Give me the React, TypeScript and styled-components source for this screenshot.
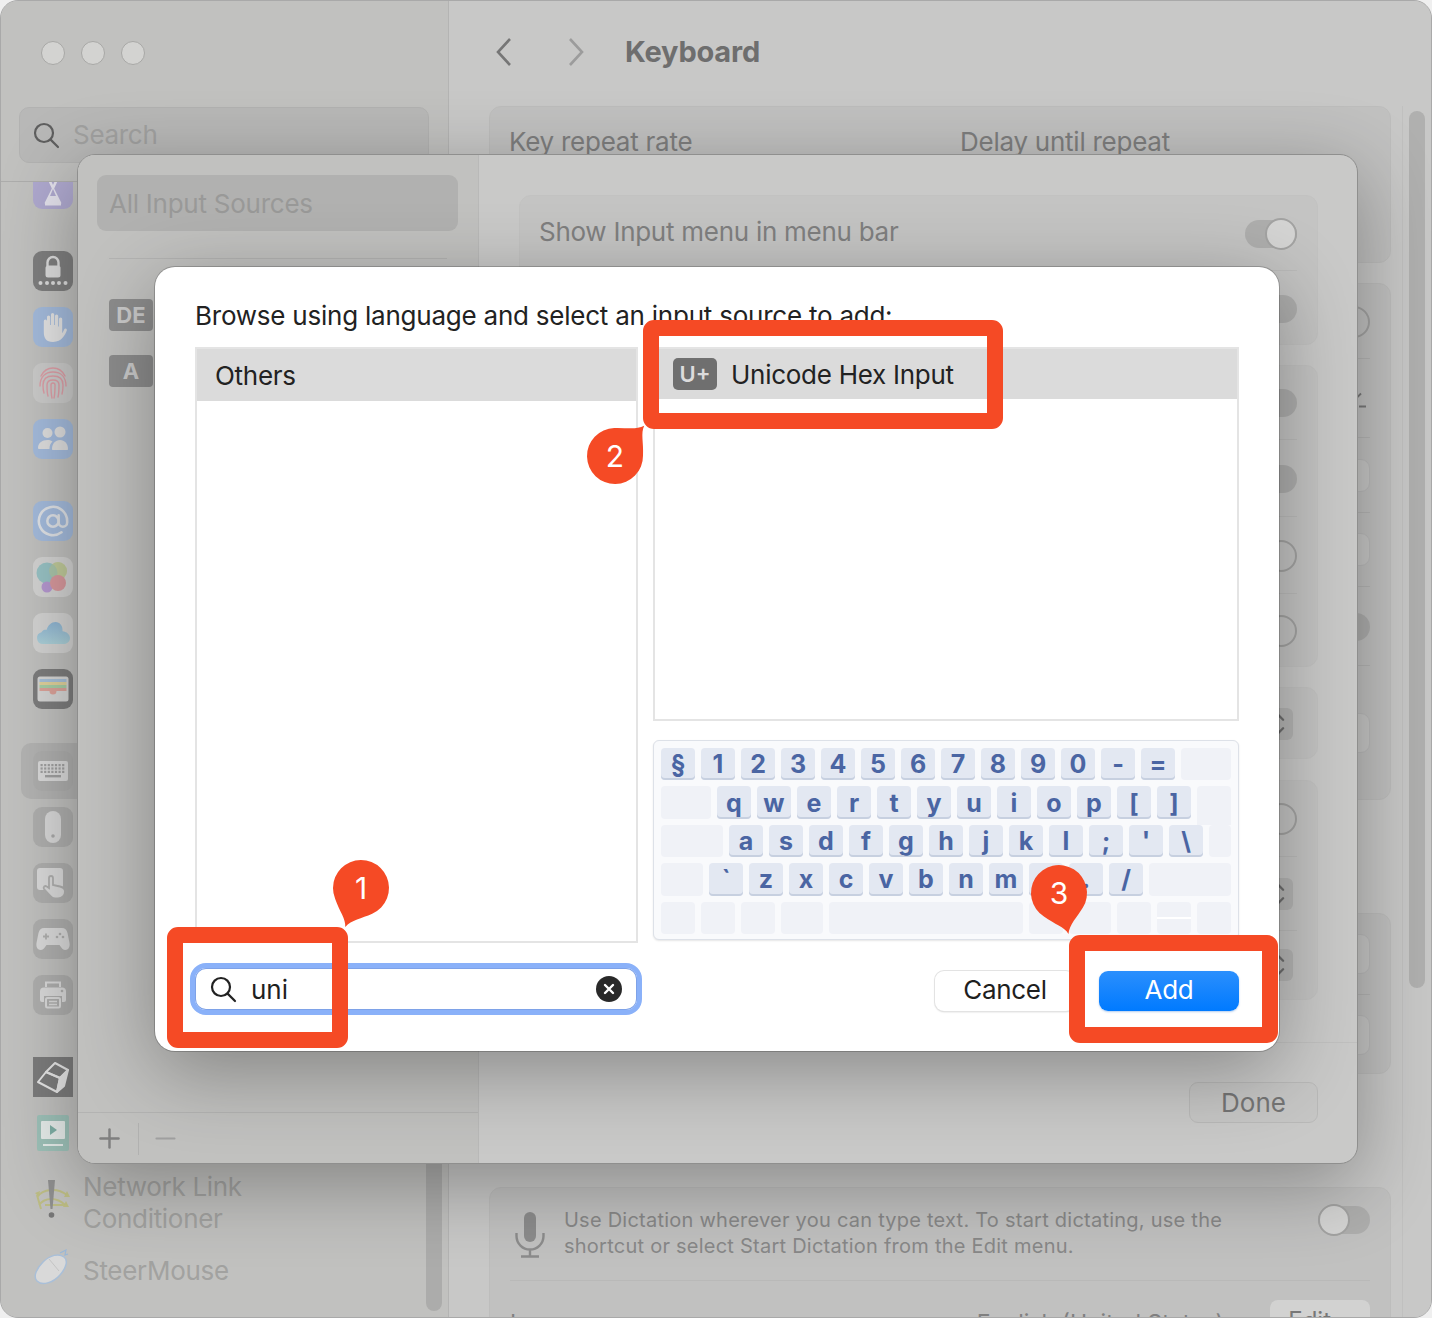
import React from "react";
import styled, { createGlobalStyle } from "styled-components";
import { Plus, Minus, ChevronsUpDown, AtSign } from "lucide-react";

const Global = createGlobalStyle`
  html, body { margin: 0; padding: 0; background: #efefef; }
  body { width: 1432px; height: 1318px; overflow: hidden; font-family: Inter, "Noto Sans", sans-serif; -webkit-font-smoothing: antialiased; }
  * { box-sizing: border-box; }
`;

const Page = styled.div`
  position: relative;
  width: 1432px;
  height: 1318px;
  overflow: hidden;
`;

const Window = styled.div`
  display: flex;
  isolation: isolate;
  width: 1432px;
  height: 1318px;
  border: 1px solid #a9a9a9;
  border-radius: 18px;
  overflow: hidden;
  background: #c6c6c5;
`;

/* ---------- back window: sidebar ---------- */
const Sidebar = styled.aside`
  position: relative;
  width: 448px;
  flex: none;
  height: 100%;
  background: #c1c1bf;
  border-right: 1px solid #b4b4b3;
  overflow: hidden;
`;
const SideHead = styled.div`
  height: 181px;
  border-bottom: 1px solid #adadac;
  padding: 106px 18px 0;
  position: relative;
  z-index: 1;
  background: #c1c1bf;
`;
const Traffic = styled.div`
  position: absolute;
  left: 40px;
  top: 40px;
  display: flex;
  gap: 16px;
`;
const Light = styled.span`
  width: 24px;
  height: 24px;
  border-radius: 50%;
  background: #d3d3d1;
  border: 1px solid #a8a8a6;
`;
const SideSearch = styled.div`
  display: flex;
  align-items: center;
  gap: 13px;
  height: 56px;
  width: 410px;
  padding: 0 0 0 13px;
  border-radius: 10px;
  background: #b8b8b7;
  border: 1px solid #b2b2b1;
  color: #a1a1a0;
  font-size: 26px;
  letter-spacing: -0.3px;
  line-height: 60px;
  svg { flex: none; }
`;
const SideList = styled.div`
  display: flex;
  flex-direction: column;
  margin-top: -21px;
`;
const Group = styled.div`
  display: flex;
  flex-direction: column;
  margin-bottom: 26px;
`;
const Row = styled.div<{ $selected?: boolean; $h?: number }>`
  display: flex;
  align-items: center;
  gap: 10px;
  height: ${(p) => p.$h ?? 56}px;
  margin: 0 12px 0 20px;
  padding-left: 12px;
  border-radius: 10px;
  background: ${(p) => (p.$selected ? "#b3b3b2" : "transparent")};
`;
const Tile = styled.div<{ $bg: string; $fg?: string; $radius?: number; $w?: number; $h?: number }>`
  width: ${(p) => p.$w ?? 40}px;
  height: ${(p) => p.$h ?? 40}px;
  margin-left: ${(p) => (40 - (p.$w ?? 40)) / 2}px;
  flex: none;
  border-radius: ${(p) => p.$radius ?? 9}px;
  background: ${(p) => p.$bg};
  color: ${(p) => p.$fg ?? "#dcdcdc"};
  display: flex;
  align-items: center;
  justify-content: center;
`;
const SideLabel = styled.div`
  margin-top: 4px;
  font-size: 26px;
  letter-spacing: -0.3px;
  line-height: 32px;
  color: #a2a2a0;
`;
const SideThumb = styled.div`
  position: absolute;
  left: 425px;
  top: 1130px;
  width: 16px;
  height: 180px;
  border-radius: 8px;
  background: #acacab;
`;

/* ---------- back window: main ---------- */
const Main = styled.main`
  position: relative;
  flex: 1;
  min-width: 0;
  height: 100%;
  padding: 0 40px;
  overflow: hidden;
  background: #c8c8c7;
`;
const TitleBar = styled.header`
  display: flex;
  align-items: center;
  height: 105px;
  padding: 0 0 4px 6px;
  gap: 54px;
  svg { flex: none; }
`;
const Title = styled.h1`
  margin: 0 0 0 -14px;
  font-size: 29px;
  font-weight: 700;
  color: #6e6e6e;
  letter-spacing: -0.2px;
`;
const Card = styled.section<{ $h: number; $mt?: number }>`
  width: 902px;
  height: ${(p) => p.$h}px;
  margin-top: ${(p) => p.$mt ?? 0}px;
  border: 1px solid #bdbdbc;
  border-radius: 12px;
  background: #c1c1c0;
`;
const CardTop = styled.div`
  display: flex;
  padding: 19px 19px 0;
  font-size: 26px;
  letter-spacing: -0.25px;
  line-height: 32px;
  color: #7e7e7e;
  span { width: 451px; flex: none; }
`;
const CardRow = styled.div<{ $h: number; $line?: boolean }>`
  display: flex;
  align-items: center;
  justify-content: flex-end;
  height: ${(p) => p.$h}px;
  margin: 0 20px;
  border-bottom: ${(p) => (p.$line ? "1px solid #b5b5b4" : "0")};
`;
const Toggle = styled.span<{ $mode: "on" | "off" | "ring"; $knob?: "l" | "r" }>`
  display: flex;
  justify-content: ${(p) => (p.$knob === "l" ? "flex-start" : "flex-end")};
  align-items: center;
  flex: none;
  width: 52px;
  height: 28px;
  margin-top: 1px;
  padding: 0;
  border-radius: 15px;
  background: ${(p) => (p.$mode === "ring" ? "transparent" : "#aeaead")};
  &::after {
    content: "";
    display: ${(p) => (p.$mode === "off" ? "none" : "block")};
    width: 28px;
    height: 28px;
    border-radius: 50%;
    background: ${(p) => (p.$mode === "ring" ? "transparent" : "#d4d4d3")};
    border: 2px solid #a3a3a2;
  }
`;
const DictToggle = styled(Toggle)`
  margin-top: -1px;
`;
const SmallButton = styled.span<{ $w?: number; $h?: number }>`
  display: flex;
  align-items: center;
  justify-content: center;
  width: ${(p) => p.$w ?? 110}px;
  height: ${(p) => p.$h ?? 40}px;
  border-radius: 9px;
  background: #c8c8c7;
  border: 1px solid #bbb;
`;
const DictText = styled.p`
  margin: 0;
  flex: 1;
  font-size: 20px;
  letter-spacing: 0.24px;
  line-height: 26px;
  color: #888;
`;
const DictRow = styled.div`
  display: flex;
  align-items: flex-start;
  gap: 19px;
  height: 93px;
  margin: 0 20px;
  border-bottom: 1px solid #b9b9b8;
  padding: 19px 0 0 5px;
  svg { flex: none; margin-top: 5px; }
`;
const LangRow = styled.div`
  display: flex;
  align-items: flex-start;
  justify-content: space-between;
  margin: 19px 20px 0;
  font-size: 23px;
  line-height: 26px;
  color: #808080;
`;
const LangName = styled.span`
  margin-top: 10px;
`;
const LangValue = styled.div`
  display: flex;
  align-items: flex-start;
  gap: 46px;
  margin-left: auto;
`;
const EditButton = styled.span`
  width: 100px;
  height: 40px;
  border-radius: 8px;
  background: #d2d2d1;
  text-align: center;
  font-size: 24px;
  line-height: 42px;
  color: #777;
`;
const Track = styled.div`
  position: absolute;
  right: 0;
  top: 105px;
  bottom: 0;
  width: 29px;
  background: #c8c8c7;
  border-left: 1px solid #c0c0bf;
`;
const Thumb = styled.div`
  position: absolute;
  left: 6px;
  top: 5px;
  width: 16px;
  height: 877px;
  border-radius: 8px;
  background: #b0b0af;
`;

/* ---------- sheet ---------- */
const Sheet = styled.div`
  position: absolute;
  left: 77px;
  top: 154px;
  width: 1281px;
  height: 1010px;
  display: flex;
  border: 1px solid #8f8f8e;
  border-radius: 18px;
  overflow: hidden;
  background: #c9c9c8;
  box-shadow: 0 20px 80px rgba(0, 0, 0, 0.32);
`;
const SheetLeft = styled.div`
  display: flex;
  flex-direction: column;
  width: 401px;
  flex: none;
  background: #c1c1bf;
  border-right: 1px solid #b9b9b8;
`;
const LeftBody = styled.div`
  flex: 1;
  padding: 20px 20px 0 19px;
`;
const AllSources = styled.div`
  height: 56px;
  padding: 0 12px;
  border-radius: 9px;
  background: #b1b1b0;
  font-size: 26px;
  letter-spacing: -0.25px;
  line-height: 58px;
  color: #999998;
`;
const LeftLine = styled.div`
  height: 1px;
  margin: 27px 11px 40px 12px;
  background: #b3b3b2;
`;
const SourceRow = styled.div`
  height: 56px;
  padding-left: 12px;
`;
const SourceBadge = styled.span`
  display: block;
  width: 44px;
  height: 32px;
  border-radius: 4px;
  background: #8c8c8c;
  color: #c9c9c9;
  font-size: 22px;
  font-weight: 700;
  line-height: 32px;
  text-align: center;
`;
const LeftFoot = styled.div`
  display: flex;
  align-items: center;
  height: 51px;
  border-top: 1px solid #b3b3b2;
  color: #7f7f7f;
  padding: 1px 0 0 16px;
  svg { flex: none; }
`;
const FootSep = styled.span`
  width: 1px;
  height: 32px;
  margin: 0 11px 0 13px;
  background: #b1b1b0;
`;
const SheetRight = styled.div`
  display: flex;
  flex-direction: column;
  flex: 1;
  min-width: 0;
  padding: 40px 39px 0 40px;
`;
const SheetCard = styled.section<{ $h: number; $mt?: number }>`
  height: ${(p) => p.$h}px;
  margin-top: ${(p) => p.$mt ?? 0}px;
  flex: none;
  border: 1px solid #c2c2c1;
  border-radius: 12px;
  background: #c4c4c3;
`;
const SheetRow = styled.div<{ $h: number; $line?: boolean }>`
  display: flex;
  align-items: center;
  justify-content: flex-end;
  height: ${(p) => p.$h}px;
  margin: 0 20px 0 19px;
  border-bottom: ${(p) => (p.$line ? "1px solid #bbbbba" : "0")};
`;
const SheetLabel = styled.span`
  margin: -4px auto 0 0;
  font-size: 26px;
  letter-spacing: -0.27px;
  color: #7f7f7f;
`;
const Chevrons = styled.span`
  display: flex;
  align-items: center;
  justify-content: flex-end;
  width: 44px;
  height: 32px;
  margin-right: 4px;
  border-radius: 6px;
  background: #b5b5b4;
  color: #6e6e6e;
`;
const SheetFooter = styled.div`
  display: flex;
  justify-content: flex-end;
  flex: 1;
  margin: 42px -39px 0 0;
  padding: 39px 39px 0 0;
  border-top: 1px solid #c0c0bf;
`;
const DoneButton = styled.span`
  width: 129px;
  height: 41px;
  border: 1px solid #b9b9b8;
  border-radius: 9px;
  background: #c6c6c5;
  text-align: center;
  font-size: 26px;
  line-height: 39px;
  color: #757575;
`;

/* ---------- dialog ---------- */
const Dialog = styled.div`
  position: absolute;
  left: 155px;
  top: 267px;
  width: 1124px;
  height: 784px;
  display: flex;
  flex-direction: column;
  padding: 33px 40px 0 40px;
  border-radius: 20px;
  background: #fff;
  box-shadow: 0 0 0 1px rgba(0, 0, 0, 0.2), 0 20px 80px rgba(0, 0, 0, 0.32);
  color: #222;
`;
const Heading = styled.div`
  font-size: 26px;
  line-height: 32px;
  height: 47px;
  letter-spacing: -0.23px;
`;
const Columns = styled.div`
  display: flex;
  gap: 15px;
  flex: none;
`;
const ListBox = styled.div<{ $h: number; $w: number }>`
  width: ${(p) => p.$w}px;
  height: ${(p) => p.$h}px;
  flex: none;
  border: 2px solid #e4e4e4;
`;
const ListHead = styled.div<{ $h: number }>`
  display: flex;
  align-items: center;
  gap: 14px;
  height: ${(p) => p.$h}px;
  padding-left: 18px;
  background: #dbdbdb;
  font-size: 26px;
  letter-spacing: -0.27px;
`;
const UBadge = styled.span`
  width: 44px;
  height: 32px;
  border-radius: 5px;
  background: #6f6f6f;
  color: #dcdcdc;
  font-size: 22px;
  font-weight: 600;
  letter-spacing: 0;
  line-height: 32px;
  text-align: center;
`;
const RightCol = styled.div`
  display: flex;
  flex-direction: column;
  gap: 19px;
`;
const Keyboard = styled.div`
  display: flex;
  flex-direction: column;
  gap: 6px;
  width: 586px;
  height: 200px;
  padding: 7px 7px;
  border: 1px solid #dde1e8;
  border-radius: 6px;
  background: #f9fafc;
  box-shadow: 0 1px 2px rgba(0, 0, 0, 0.1);
`;
const KeyRow = styled.div`
  display: flex;
  gap: 6px;
  height: 32.4px;
`;
const Key = styled.span<{ $w?: number; $blank?: boolean; $join?: boolean; $halves?: boolean }>`
  display: flex;
  align-items: center;
  justify-content: center;
  position: relative;
  width: ${(p) => p.$w ?? 34}px;
  height: ${(p) => (p.$join ? 38.4 : 32.4)}px;
  flex: none;
  border-radius: ${(p) => (p.$join ? "4px 4px 0 0" : "4px")};
  background: ${(p) =>
    p.$halves
      ? "linear-gradient(#f0f2f7 0 15px, #fff 15px 17px, #f0f2f7 17px)"
      : p.$blank
      ? "#f0f2f7"
      : "#e3e8f2"};
  box-shadow: ${(p) => (p.$blank ? "none" : "inset 0 -2px 0 #c7d0e0")};
  color: #4a65a3;
  font-size: 25px;
  font-weight: 700;
  line-height: 1;
  padding-top: 1px;
`;
const Bottom = styled.div`
  display: flex;
  align-items: center;
  flex: 1;
  padding-bottom: 12px;
`;
const Field = styled.div`
  display: flex;
  align-items: center;
  width: 452px;
  height: 52px;
  margin: -4px 0 0 -5px;
  padding: 0 15px 0 15px;
  gap: 14px;
  border: 5px solid #8ab1f9;
  border-radius: 16px;
  box-shadow: inset 0 0 0 1px #7ea2e8;
  font-size: 26px;
  color: #1f1f1f;
  svg { flex: none; }
`;
const Clear = styled.span`
  display: flex;
  align-items: center;
  justify-content: center;
  width: 26px;
  height: 26px;
  margin-left: auto;
  border-radius: 50%;
  background: #292929;
`;
const Cancel = styled.span`
  width: 140px;
  height: 40px;
  margin-left: auto;
  border-radius: 9px;
  background: #fff;
  box-shadow: 0 0 0 1px #e3e3e3, 0 1px 2px rgba(0, 0, 0, 0.2);
  text-align: center;
  font-size: 26px;
  letter-spacing: -0.3px;
  line-height: 38px;
  color: #1f1f1f;
`;
const Add = styled.span`
  width: 140px;
  height: 40px;
  margin-left: 24px;
  border-radius: 9px;
  background: linear-gradient(#2b8ffd, #007aff);
  box-shadow: 0 1px 2px rgba(0, 90, 200, 0.3);
  text-align: center;
  font-size: 26px;
  letter-spacing: -0.3px;
  line-height: 38px;
  color: #fff;
`;

/* ---------- annotations ---------- */
const Frame = styled.div<{ $x: number; $y: number; $w: number; $h: number }>`
  position: absolute;
  left: ${(p) => p.$x}px;
  top: ${(p) => p.$y}px;
  width: ${(p) => p.$w}px;
  height: ${(p) => p.$h}px;
  border: 16px solid #f54a25;
  border-radius: 11px;
`;
const PinBox = styled.div<{ $x: number; $y: number }>`
  position: absolute;
  left: ${(p) => p.$x - 28}px;
  top: ${(p) => p.$y - 28}px;
  width: 56px;
  height: 56px;
  display: flex;
  align-items: center;
  justify-content: center;
  color: #fff;
  font-size: 30px;
  line-height: 1;
  svg {
    position: absolute;
    left: 0;
    top: 0;
    overflow: visible;
  }
  span { position: relative; }
`;

const PIN = "M0 42 C-2.6 34 -11 30 -20 19.6 A28 28 0 1 1 20 19.6 C12 28 3 33 0 42 Z";

function Pin({ x, y, rot, n }: { x: number; y: number; rot: number; n: number }) {
  return (
    <PinBox $x={x} $y={y}>
      <svg width="56" height="56" viewBox="-28 -28 56 56">
        <path d={PIN} fill="#f54a25" transform={`rotate(${rot})`} />
      </svg>
      <span>{n}</span>
    </PinBox>
  );
}

const R1 = "§ 1 2 3 4 5 6 7 8 9 0 - =".split(" ");
const R2 = "q w e r t y u i o p [ ]".split(" ");
const R3 = "a s d f g h j k l ; ' \\".split(" ");
const R4 = "` z x c v b n m , . /".split(" ");

const Magnifier = ({ color }: { color: string }) => (
  <svg width="27" height="27" viewBox="0 0 27 27" fill="none" stroke={color} strokeWidth="2.2" strokeLinecap="round">
    <circle cx="11" cy="11" r="9" />
    <path d="M17.6 17.6 25 25" />
  </svg>
);
const Hand = () => (
  <svg width="30" height="32" viewBox="0 0 30 32" fill="#e4e4e4">
    <path d="M9 6a1.6 1.6 0 0 1 3.2 0v8h.8V3.6a1.6 1.6 0 0 1 3.2 0V14h.8V5a1.6 1.6 0 0 1 3.2 0v10.5h.8V8a1.6 1.6 0 0 1 3.2 0v13c0 2 .6 .6 1.8-2.2.8-2 3.4-1.4 2.8.8C27 24 24 31 15 31 8 31 5.8 27 5.8 21V10a1.6 1.6 0 0 1 3.2 0Z" />
  </svg>
);
const Lock = () => (
  <svg width="36" height="36" viewBox="0 0 36 36">
    <path d="M12.5 13V9.5a5.5 5.5 0 0 1 11 0V13" fill="none" stroke="#dcdcdc" strokeWidth="2.4" />
    <rect x="10.5" y="12.5" width="15" height="12" rx="2.5" fill="#dcdcdc" />
    {[5.5, 12, 18, 24, 30.5].map((c) => (
      <circle key={c} cx={c} cy="30" r="2" fill="#dcdcdc" />
    ))}
  </svg>
);
const People = () => (
  <svg width="32" height="26" viewBox="0 0 32 26" fill="#dedede">
    <circle cx="10.5" cy="7" r="5" />
    <circle cx="23" cy="6" r="5.5" />
    <path d="M1 22c0-5 4-8 9.5-8 2.5 0 4 .7 5 1.5-2 1.8-3 4-3 7.5H2.5C1.5 23 1 22.8 1 22Z" />
    <path d="M15 23c0-5.5 3.5-9 8-9s8 3.5 8 9c0 .6-.4 1-1 1H16c-.6 0-1-.4-1-1Z" />
  </svg>
);
const FingerprintIcon = () => (
  <svg width="30" height="34" viewBox="0 0 30 34" fill="none" stroke="#dd9ea6" strokeWidth="1.4" strokeLinecap="round">
    <path d="M3 10C6 4 10 2 15 2s9 2 12 8" />
    <path d="M2 20c0-9 5-14 13-14s13 5 13 14" />
    <path d="M6 27c-1-3-1-6-1-8 0-6 4-9 10-9s10 3 10 9c0 3 0 6-1 9" />
    <path d="M10 30c-1-3-1-7-1-11 0-3 2-5 6-5s6 2 6 5c0 4 0 8-1 12" />
    <path d="M14 32c-1-4-1-9-1-13 0-1 1-2 2-2s2 1 2 2c0 4 0 9-1 13" />
  </svg>
);
const Hourglass = () => (
  <svg width="26" height="36" viewBox="0 0 26 36" fill="none" stroke="#e4e2ec" strokeWidth="2.6" strokeLinejoin="round">
    <path d="M5 3h16M5 33h16" strokeWidth="3" />
    <path d="M7 4 19 4 13 17Z" />
    <path d="M13 18 20 32H6Z" fill="#e4e2ec" />
    <path d="M13 18 16 25H10Z" fill="#afa9cf" stroke="none" />
  </svg>
);
const GameCenter = () => (
  <svg width="34" height="34" viewBox="0 0 34 34">
    <circle cx="22" cy="11" r="9" fill="#cfcf9b" />
    <circle cx="11" cy="13" r="10.5" fill="#98c2c4" />
    <circle cx="22" cy="11" r="9" fill="#b6c79a" opacity=".6" />
    <circle cx="11" cy="27" r="5.5" fill="#b598cf" />
    <circle cx="22" cy="23" r="8" fill="#d8999d" />
  </svg>
);
const Cloud = () => (
  <svg width="34" height="22" viewBox="0 0 34 22">
    <defs>
      <linearGradient id="cl" x1="0" y1="0" x2="0" y2="1">
        <stop offset="0" stopColor="#8fb5d3" />
        <stop offset="1" stopColor="#acd0d8" />
      </linearGradient>
    </defs>
    <path d="M7 22a6 6 0 0 1-1.5-11.8C7 8 9 7.6 10.5 8 12 3 15.5 0 19.5 0 24 0 27 4 26.5 9.2 30.5 9.5 34 12.5 34 16c0 3.5-3 6-6 6Z" fill="url(#cl)" />
  </svg>
);
const Wallet = () => (
  <svg width="32" height="26" viewBox="0 0 32 26">
    <rect x="0.5" y="0.5" width="31" height="25" rx="2.5" fill="#d6d6d5" />
    <rect x="2.5" y="3" width="27" height="3" fill="#a7c0d8" />
    <rect x="2.5" y="6" width="27" height="3" fill="#e0d29c" />
    <rect x="2.5" y="9" width="27" height="3" fill="#a9cfa6" />
    <path d="M2.5 12h27v3H19.5a3.5 3.5 0 0 1-7 0H2.5Z" fill="#dca39a" />
  </svg>
);
const Kbd = () => (
  <svg width="30" height="20" viewBox="0 0 30 20">
    <rect width="30" height="20" rx="2" fill="#dadada" />
    {[0, 1, 2].map((r) =>
      [0, 1, 2, 3, 4, 5, 6].map((c) => (
        <rect key={`${r}-${c}`} x={2.5 + c * 3.6} y={3 + r * 3.4} width="2.2" height="2.2" fill="#a1a1a1" />
      ))
    )}
    <rect x="7" y="14" width="16" height="2.4" fill="#a1a1a1" />
  </svg>
);
const Mouse = () => (
  <svg width="18" height="34" viewBox="0 0 18 34">
    <rect x="1" y="1" width="16" height="32" rx="8" fill="#d8d8d8" />
    <circle cx="9" cy="26" r="1.8" fill="#a9a9a9" />
  </svg>
);
const Trackpad = () => (
  <svg width="36" height="36" viewBox="0 0 36 36">
    <rect x="2" y="3" width="26" height="22" rx="3" fill="#dadada" />
    <path d="M14 13a2 2 0 0 1 4 0v7l7 1.5c3 .7 5 2 5 5 0 4-3 7-7 7h-3c-2 0-3.5-1-4.5-2.5L9 24c-1.2-2 1-3.8 2.8-2.4L14 23Z" fill="#dadada" stroke="#afafae" strokeWidth="1.8" />
  </svg>
);
const Gamepad = () => (
  <svg width="34" height="26" viewBox="0 0 34 26">
    <path d="M8 2h18c3 0 4.5 1.5 5.5 5l2 10c.6 4-1 7-4 7-2.5 0-4-2-6-5H10.5c-2 3-3.5 5-6 5-3 0-4.6-3-4-7l2-10C3.5 3.5 5 2 8 2Z" fill="#dadada" />
    <path d="M7 10.5h6M10 7.5v6" stroke="#afafae" strokeWidth="1.8" />
    <circle cx="24" cy="8" r="1.3" fill="#afafae" />
    <circle cx="21" cy="11" r="1.3" fill="#afafae" />
    <circle cx="27" cy="11" r="1.3" fill="#afafae" />
  </svg>
);
const PrinterIcon = () => (
  <svg width="28" height="28" viewBox="0 0 28 28">
    <path d="M7 6V1.5h14V6" fill="none" stroke="#dadada" strokeWidth="2" />
    <path d="M5 6.5h18a4 4 0 0 1 4 4V19a2 2 0 0 1-2 2h-2v-6H5v6H3a2 2 0 0 1-2-2v-8.5a4 4 0 0 1 4-4Z" fill="#dadada" />
    <rect x="7" y="17" width="14" height="9.5" rx="1.5" fill="none" stroke="#dadada" strokeWidth="2" />
    <path d="M10 20.5h8M10 23.5h8" stroke="#dadada" strokeWidth="1.6" />
    <circle cx="23" cy="10" r="1.3" fill="#afafae" />
  </svg>
);
const Cube = () => (
  <svg width="40" height="40" viewBox="0 0 40 40" fill="none" stroke="#e6e6e6" strokeWidth="2" strokeLinejoin="round">
    <path d="M22 6 35 13 27 21 13 15Z" />
    <path d="M13 15 27 21 24 35 5 25Z" />
    <path d="M27 21 35 13 31 29 24 35Z" fill="#e6e6e6" />
  </svg>
);
const Video = () => (
  <svg width="26" height="27" viewBox="0 0 26 27">
    <rect x="1" y="1" width="24" height="18" rx="1" fill="#e6ecea" />
    <path d="M10 5 17 10 10 15Z" fill="#7fb0a6" />
    <rect x="3" y="24" width="20" height="2" fill="#e6ecea" />
  </svg>
);
const NetLink = () => (
  <svg width="40" height="44" viewBox="0 0 40 44" fill="none">
    <path d="M4 18c6-8 20-10 30-2M6 26c6-8 18-8 26 0M8 30 4 16M12 26 32 26" stroke="#bdbd85" strokeWidth="2" />
    <path d="M34 12l3 6-6 0ZM33 22l3 6-6 0ZM2 14l5-2-1 6Z" fill="#bdbd85" />
    <path d="M15 1h7l-2.5 29h-2Z" fill="#8f8f8f" />
    <circle cx="18.5" cy="36" r="2.8" fill="#777" />
  </svg>
);
const Steer = () => (
  <svg width="40" height="40" viewBox="0 0 40 40">
    <path d="M4 32C0 28 3 20 10 13 17 6 26 4 31 8c4 3 3 10-4 18-7 8-18 11-23 6Z" fill="#d9d9d9" stroke="#a9bfd8" strokeWidth="1.5" />
    <path d="M16 10 26 22" stroke="#c4c4c4" strokeWidth="1" />
    <path d="M27 4l6-3-1 5 3-1" stroke="#9ab8d8" strokeWidth="1.2" fill="none" />
  </svg>
);
const Mic = () => (
  <svg width="30" height="46" viewBox="0 0 30 46" fill="none">
    <rect x="9" y="0" width="12" height="30" rx="6" fill="#8c8c8c" />
    <path d="M1.5 21v3a13.5 13.5 0 0 0 27 0v-3M15 38v6M6 44.5h18" stroke="#8c8c8c" strokeWidth="2.4" />
  </svg>
);
const NavChevron = ({ dir }: { dir: "l" | "r" }) => (
  <svg width="18" height="30" viewBox="0 0 18 30" fill="none" stroke={dir === "l" ? "#767676" : "#9c9c9c"} strokeWidth="2.6">
    <path d={dir === "l" ? "M15 2 3 15 15 28" : "M3 2 15 15 3 28"} />
  </svg>
);

export default function App() {
  return (
    <>
      <Global />
      <Page>
        <Window>
          <Sidebar>
            <SideHead>
              <Traffic>
                <Light />
                <Light />
                <Light />
              </Traffic>
              <SideSearch>
                <Magnifier color="#5f5f5f" />
                Search
              </SideSearch>
            </SideHead>
            <SideList>
              <Group>
                <Row>
                  <Tile $bg="#afa9cf"><Hourglass /></Tile>
                </Row>
              </Group>
              <Group>
                <Row><Tile $bg="#7f7f7f"><Lock /></Tile></Row>
                <Row><Tile $bg="#a4bbdc"><Hand /></Tile></Row>
                <Row><Tile $bg="#cbcbca"><FingerprintIcon /></Tile></Row>
                <Row><Tile $bg="#a4bbdc"><People /></Tile></Row>
              </Group>
              <Group>
                <Row><Tile $bg="#a4bbdc" $fg="#dfe2e6"><AtSign size={34} strokeWidth={1.8} /></Tile></Row>
                <Row><Tile $bg="#d3d3d2"><GameCenter /></Tile></Row>
                <Row><Tile $bg="#d3d3d2"><Cloud /></Tile></Row>
                <Row><Tile $bg="#7d7d7d"><Wallet /></Tile></Row>
              </Group>
              <Group>
                <Row $selected><Tile $bg="#afafae"><Kbd /></Tile></Row>
                <Row><Tile $bg="#afafae"><Mouse /></Tile></Row>
                <Row><Tile $bg="#afafae"><Trackpad /></Tile></Row>
                <Row><Tile $bg="#afafae"><Gamepad /></Tile></Row>
                <Row><Tile $bg="#afafae"><PrinterIcon /></Tile></Row>
              </Group>
              <Group>
                <Row><Tile $bg="#7c7c7c" $radius={0}><Cube /></Tile></Row>
                <Row><Tile $bg="#9dc1b8" $radius={2} $w={32} $h={36}><Video /></Tile></Row>
                <Row $h={80}>
                  <Tile $bg="transparent"><NetLink /></Tile>
                  <SideLabel>Network Link<br />Conditioner</SideLabel>
                </Row>
                <Row>
                  <Tile $bg="transparent"><Steer /></Tile>
                  <SideLabel>SteerMouse</SideLabel>
                </Row>
              </Group>
            </SideList>
            <SideThumb />
          </Sidebar>
          <Main>
            <TitleBar>
              <NavChevron dir="l" />
              <NavChevron dir="r" />
              <Title>Keyboard</Title>
            </TitleBar>
            <Card $h={157}>
              <CardTop>
                <span>Key repeat rate</span>
                <span>Delay until repeat</span>
              </CardTop>
            </Card>
            <Card $h={517} $mt={20}>
              <CardRow $h={75} $line><Toggle $mode="ring" /></CardRow>
              <CardRow $h={79} $line>
                <svg width="80" height="20" viewBox="0 0 80 20" fill="none" stroke="#7a7a7a" strokeWidth="1.8">
                  <path d="M66 10.5 71 5.5M69 18.5h7" />
                </svg>
              </CardRow>
              <CardRow $h={75} $line><SmallButton $h={33} /></CardRow>
              <CardRow $h={74} $line><SmallButton $h={33} /></CardRow>
              <CardRow $h={79} $line><Toggle $mode="off" /></CardRow>
              <CardRow $h={133}><SmallButton /></CardRow>
            </Card>
            <Card $h={161} $mt={113}>
              <CardRow $h={81} $line><SmallButton /></CardRow>
              <CardRow $h={79}><SmallButton /></CardRow>
            </Card>
            <Card $h={170} $mt={113}>
              <DictRow>
                <Mic />
                <DictText>
                  Use Dictation wherever you can type text. To start dictating, use the
                  <br />
                  shortcut or select Start Dictation from the Edit menu.
                </DictText>
                <DictToggle $mode="on" $knob="l" />
              </DictRow>
              <LangRow>
                <LangName>Languages</LangName>
                <LangValue>
                  <LangName>English (United States)</LangName>
                  <EditButton>Edit…</EditButton>
                </LangValue>
              </LangRow>
            </Card>
            <Track>
              <Thumb />
            </Track>
          </Main>
        </Window>

        <Sheet>
          <SheetLeft>
            <LeftBody>
              <AllSources>All Input Sources</AllSources>
              <LeftLine />
              <SourceRow><SourceBadge>DE</SourceBadge></SourceRow>
              <SourceRow><SourceBadge>A</SourceBadge></SourceRow>
            </LeftBody>
            <LeftFoot>
              <Plus size={31} strokeWidth={1.9} />
              <FootSep />
              <Minus size={31} strokeWidth={1.6} color="#a0a0a0" />
            </LeftFoot>
          </SheetLeft>
          <SheetRight>
            <SheetCard $h={150}>
              <SheetRow $h={75} $line>
                <SheetLabel>Show Input menu in menu bar</SheetLabel>
                <Toggle $mode="on" />
              </SheetRow>
              <SheetRow $h={74}><Toggle $mode="off" /></SheetRow>
            </SheetCard>
            <SheetCard $h={302} $mt={20}>
              <SheetRow $h={74} $line><Toggle $mode="off" /></SheetRow>
              <SheetRow $h={77} $line><Toggle $mode="off" /></SheetRow>
              <SheetRow $h={77} $line><Toggle $mode="ring" /></SheetRow>
              <SheetRow $h={72}><Toggle $mode="ring" /></SheetRow>
            </SheetCard>
            <SheetCard $h={72} $mt={20}>
              <SheetRow $h={72}><Chevrons><ChevronsUpDown size={34} strokeWidth={1.6} /></Chevrons></SheetRow>
            </SheetCard>
            <SheetCard $h={220} $mt={21}>
              <SheetRow $h={76} $line><Toggle $mode="ring" /></SheetRow>
              <SheetRow $h={74} $line><Chevrons><ChevronsUpDown size={34} strokeWidth={1.6} /></Chevrons></SheetRow>
              <SheetRow $h={68}><Chevrons><ChevronsUpDown size={34} strokeWidth={1.6} /></Chevrons></SheetRow>
            </SheetCard>
            <SheetFooter>
              <DoneButton>Done</DoneButton>
            </SheetFooter>
          </SheetRight>
        </Sheet>

        <Dialog>
          <Heading>Browse using language and select an input source to add:</Heading>
          <Columns>
            <ListBox $w={443} $h={596}>
              <ListHead $h={52}>Others</ListHead>
            </ListBox>
            <RightCol>
              <ListBox $w={586} $h={374}>
                <ListHead $h={50}>
                  <UBadge>U+</UBadge>
                  Unicode Hex Input
                </ListHead>
              </ListBox>
              <Keyboard>
                <KeyRow>
                  {R1.map((k) => <Key key={k}>{k}</Key>)}
                  <Key $blank $w={50} />
                </KeyRow>
                <KeyRow>
                  <Key $blank $w={50} />
                  {R2.map((k) => <Key key={k}>{k}</Key>)}
                  <Key $blank $join />
                </KeyRow>
                <KeyRow>
                  <Key $blank $w={62} />
                  {R3.map((k) => <Key key={k}>{k}</Key>)}
                  <Key $blank $w={22} />
                </KeyRow>
                <KeyRow>
                  <Key $blank $w={42} />
                  {R4.map((k) => <Key key={k}>{k}</Key>)}
                  <Key $blank $w={82} />
                </KeyRow>
                <KeyRow>
                  <Key $blank />
                  <Key $blank />
                  <Key $blank />
                  <Key $blank $w={42} />
                  <Key $blank $w={194} />
                  <Key $blank />
                  <Key $blank $w={42} />
                  <Key $blank />
                  <Key $blank $halves />
                  <Key $blank />
                </KeyRow>
              </Keyboard>
            </RightCol>
          </Columns>
          <Bottom>
            <Field>
              <Magnifier color="#222" />
              uni
              <Clear>
                <svg width="12" height="12" viewBox="0 0 12 12" stroke="#fff" strokeWidth="2.4" strokeLinecap="round">
                  <path d="M2 2 10 10M10 2 2 10" />
                </svg>
              </Clear>
            </Field>
            <Cancel>Cancel</Cancel>
            <Add>Add</Add>
          </Bottom>
        </Dialog>

        <Frame $x={167} $y={927} $w={181} $h={121} />
        <Frame $x={643} $y={320} $w={360} $h={109} />
        <Frame $x={1069} $y={935} $w={209} $h={108} />
        <Pin x={361} y={888} rot={22} n={1} />
        <Pin x={615} y={456} rot={-136} n={2} />
        <Pin x={1059} y={893} rot={-13} n={3} />
      </Page>
    </>
  );
}
